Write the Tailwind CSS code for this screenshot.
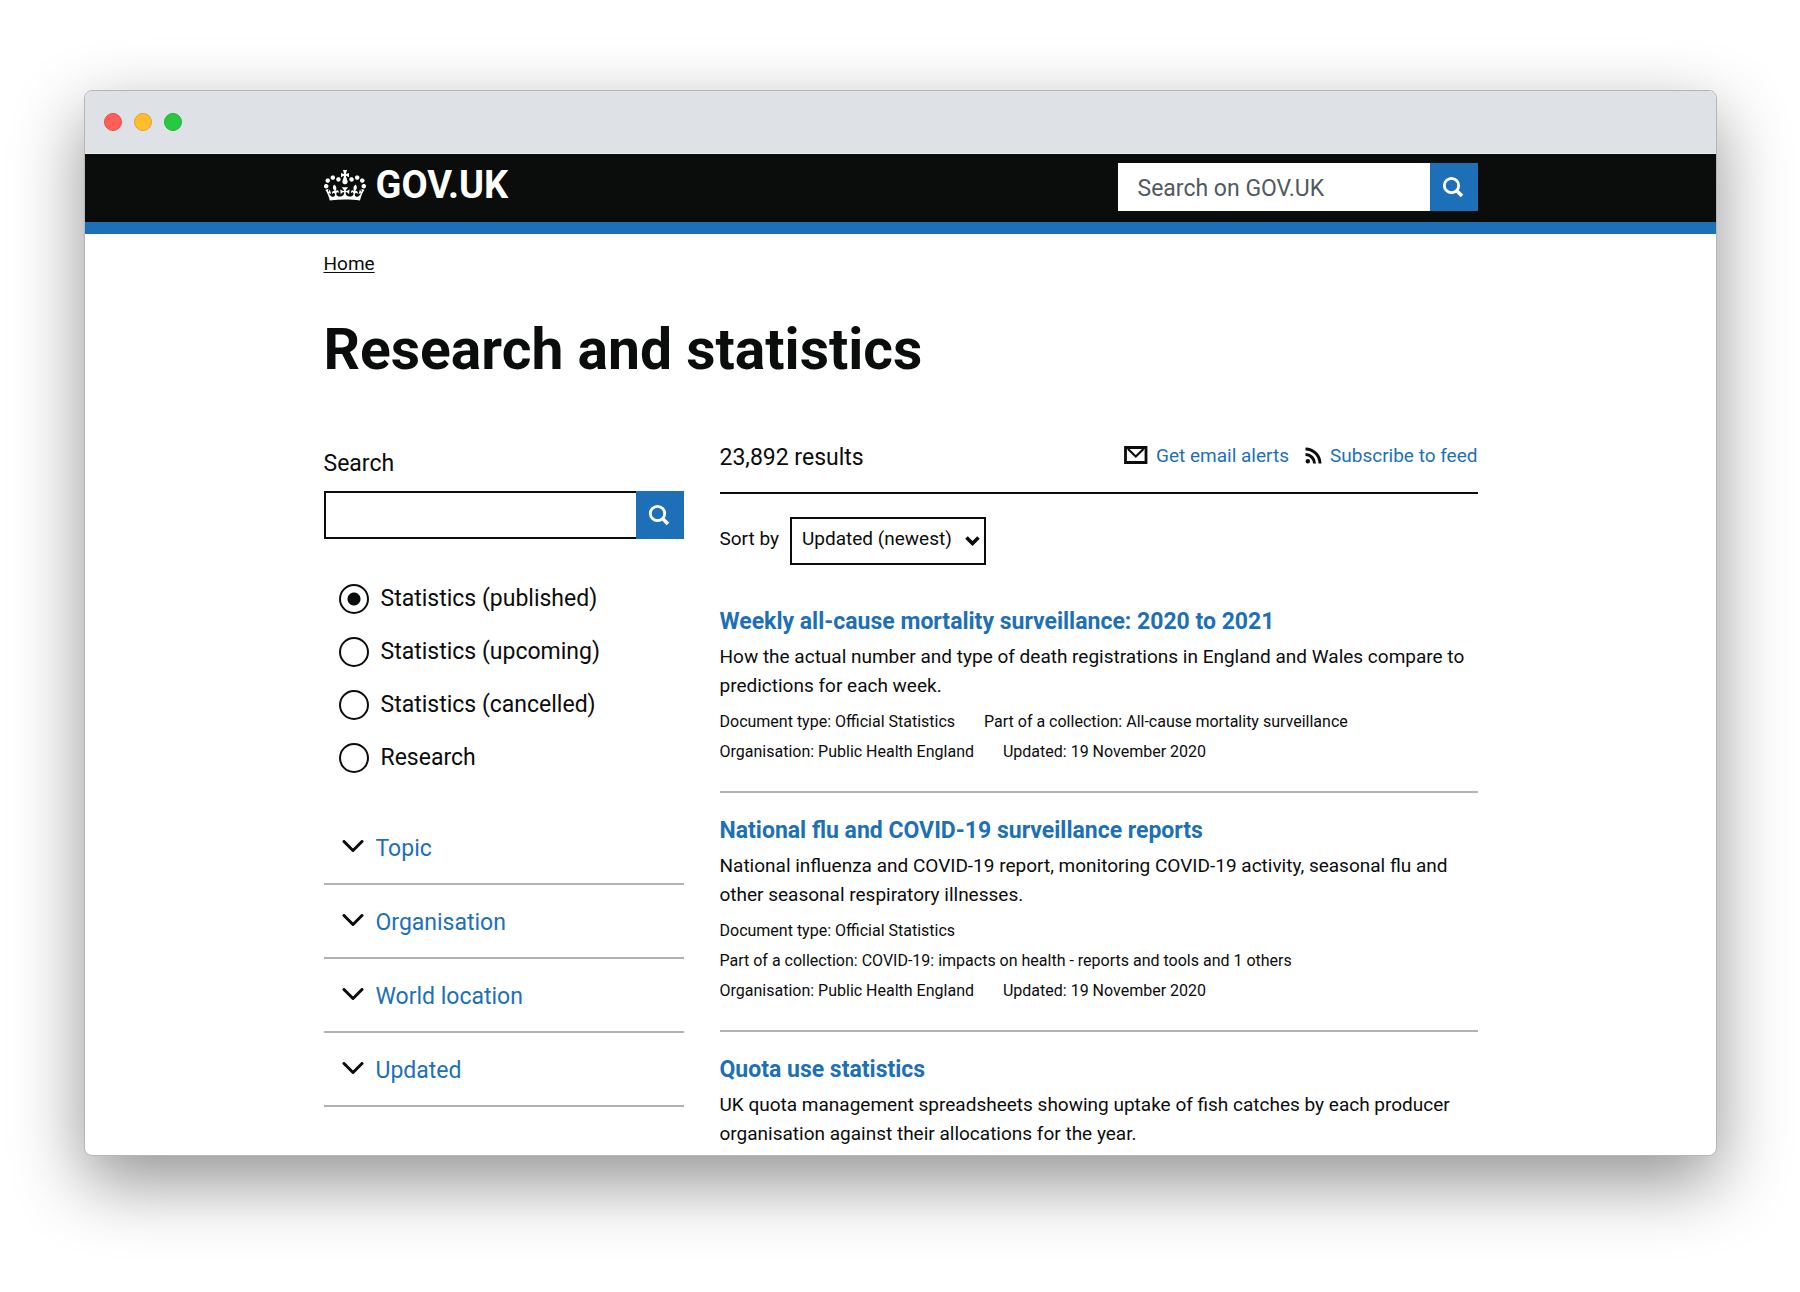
<!DOCTYPE html>
<html lang="en">
<head>
<meta charset="utf-8">
<meta name="viewport" content="width=device-width, initial-scale=1">
<title>Research and statistics - GOV.UK</title>
<script src="https://cdn.jsdelivr.net/npm/@tailwindcss/browser@4"></script>
</head>
<body class="flex h-screen flex-col bg-white pt-[90px] pr-[83px] pb-[136px] pl-[84px] font-[Roboto,sans-serif] text-[#0b0c0c]">
<div class="flex min-h-0 flex-1 flex-col overflow-hidden rounded-lg border border-[#b4b6b8] bg-white shadow-[0_26px_70px_rgba(0,0,0,0.43)]">

  <!-- Window title bar -->
  <div class="flex h-[63px] shrink-0 items-center gap-3 border-b border-[#eceef0] bg-[#dee1e6] px-[19px]">
    <span class="size-[18px] rounded-full border border-[#e2504a] bg-[#ff5f57]"></span>
    <span class="size-[18px] rounded-full border border-[#e0a32c] bg-[#ffbd2e]"></span>
    <span class="size-[18px] rounded-full border border-[#24b03a] bg-[#28c940]"></span>
  </div>

  <header class="shrink-0 border-b-12 border-[#1d70b8] bg-[#0b0c0c]">
    <div class="mx-auto flex h-[68px] w-full max-w-[1154px] items-center justify-between pb-0.5">
      <a href="#" class="flex items-center gap-2.5 pb-1 text-white">
        <svg class="h-[31px] w-[42px]" viewBox="0 0 132 97" fill="currentColor" aria-hidden="true"><path fill-rule="evenodd" d="M25 30.2c3.5 1.5 7.7-.2 9.1-3.7 1.5-3.6-.2-7.8-3.9-9.2-3.6-1.4-7.6.3-9.1 3.9-1.4 3.5.3 7.5 3.9 9zM9 39.5c3.6 1.5 7.8-.2 9.2-3.7 1.5-3.6-.2-7.8-3.9-9.1-3.6-1.5-7.6.2-9.1 3.8-1.4 3.5.3 7.5 3.8 9zM4.4 57.2c3.5 1.5 7.7-.2 9.1-3.8 1.5-3.6-.2-7.7-3.9-9.1-3.5-1.5-7.6.3-9.1 3.8-1.4 3.5.3 7.6 3.9 9.1zm38.3-21.4c3.5 1.5 7.7-.2 9.1-3.8 1.5-3.6-.2-7.7-3.9-9.1-3.6-1.5-7.6.3-9.1 3.8-1.3 3.6.4 7.7 3.9 9.1zm64.4-5.6c-3.6 1.5-7.8-.2-9.1-3.7-1.5-3.6.2-7.8 3.8-9.2 3.6-1.4 7.7.3 9.2 3.9 1.3 3.5-.4 7.5-3.9 9zm15.9 9.3c-3.6 1.5-7.7-.2-9.1-3.7-1.5-3.6.2-7.8 3.7-9.1 3.6-1.5 7.7.2 9.2 3.8 1.5 3.5-.3 7.5-3.8 9zm4.7 17.7c-3.6 1.5-7.8-.2-9.2-3.8-1.5-3.6.2-7.7 3.9-9.1 3.6-1.5 7.7.3 9.2 3.8 1.3 3.5-.4 7.6-3.9 9.1zM89.3 35.8c-3.6 1.5-7.8-.2-9.2-3.8-1.4-3.6.2-7.7 3.9-9.1 3.6-1.5 7.7.3 9.2 3.8 1.4 3.6-.3 7.7-3.9 9.1zM69.7 17.7l8.9 4.7V9.3l-8.9 2.8c-.2-.3-.5-.6-.9-.9L72.4 0H59.6l3.5 11.2c-.3.3-.6.5-.9.9l-8.8-2.8v13.1l8.8-4.7c.3.3.6.7.9.9l-5 15.4v.1c-.2.8-.4 1.6-.4 2.4 0 4.1 3.1 7.5 7 8.1h.2c.3 0 .7.1 1 .1.4 0 .7 0 1-.1h.2c4-.6 7.1-4.1 7.1-8.1 0-.8-.1-1.7-.4-2.4V34l-5.1-15.4c.4-.2.7-.6 1-.9zM66 92.8c16.9 0 32.8 1.1 47.1 3.2 4-16.9 8.9-26.7 14-33.5l-9.6-3.4c1 4.9 1.1 7.2 0 10.2-1.5-1.4-3-4.3-4.2-8.7L108.6 76c2.8-2 5-3.2 7.5-3.3-4.4 9.4-10 11.9-13.6 11.2-4.3-.8-6.3-4.6-5.6-7.9 1-4.7 5.7-5.9 8-.5 4.3-8.7-3-11.4-7.6-8.8 7.1-7.2 7.9-13.5 2.1-21.1-8 6.1-8.1 12.3-4.5 20.8-4.7-5.4-12.1-2.5-9.5 6.2 3.4-5.2 7.9-2 7.2 3.1-.6 4.3-6.4 7.8-13.5 7.2-10.3-.9-10.9-8-11.2-13.8 2.5-.5 7.1 1.8 11 7.3L80.2 60c-4.1 4.4-8 5.3-12.3 5.4 1.4-4.4 8-11.6 8-11.6H55.5s6.4 7.2 7.9 11.6c-4.2-.1-8-1-12.3-5.4l1.4 16.4c3.9-5.5 8.5-7.7 10.9-7.3-.3 5.8-.9 12.8-11.1 13.8-7.2.6-12.9-2.9-13.5-7.2-.7-5 3.8-8.3 7.1-3.1 2.7-8.7-4.6-11.6-9.4-6.2 3.7-8.5 3.6-14.7-4.6-20.8-5.8 7.6-5 13.9 2.2 21.1-4.7-2.6-11.9.1-7.7 8.8 2.3-5.5 7.1-4.2 8.1.5.7 3.3-1.3 7.1-5.7 7.9-3.5.7-9-1.8-13.5-11.2 2.5.1 4.7 1.3 7.5 3.3l-4.7-15.4c-1.2 4.4-2.7 7.2-4.3 8.7-1.1-3-.9-5.3 0-10.2l-9.5 3.4c5 6.9 9.9 16.7 14 33.5 14.8-2.1 30.8-3.2 47.7-3.2z"/></svg>
        <span class="text-[38px] leading-9 font-bold">GOV.UK</span>
      </a>
      <form class="flex h-12 w-[360px]">
        <input type="search" aria-label="Search on GOV.UK" placeholder="Search on GOV.UK" class="min-w-0 flex-1 bg-white px-5 pt-1 text-[23px] placeholder:text-[#505a5f] placeholder:opacity-100">
        <button type="button" aria-label="Search" class="flex size-12 items-center justify-center bg-[#1d70b8] text-white">
          <svg class="size-6" viewBox="0 0 24 24" fill="none" stroke="currentColor" aria-hidden="true"><circle cx="9.500" cy="10.500" r="7.200" stroke-width="2.800"/><path d="M14.500 15.500l5.500 5.500" stroke-width="3.600"/></svg>
        </button>
      </form>
    </div>
  </header>

  <div class="mx-auto w-full max-w-[1154px]">
    <nav aria-label="Breadcrumb" class="pt-[18px]">
      <a href="#" class="text-[19px] leading-6 underline underline-offset-2">Home</a>
    </nav>

    <main>
      <h1 class="mt-[41px] text-[57px] leading-[64px] font-bold">Research and statistics</h1>

      <div class="mt-[60px] grid grid-cols-[360px_minmax(0,1fr)] gap-9">
        <!-- Filters -->
        <form>
          <label for="keywords" class="mt-2 block text-[23px] leading-7">Search</label>
          <div class="mt-[13px] flex h-12">
            <input id="keywords" type="search" class="min-w-0 flex-1 border-2 border-r-0 border-[#0b0c0c] px-2 text-[23px]">
            <button type="button" aria-label="Search" class="flex size-12 items-center justify-center bg-[#1d70b8] text-white">
              <svg class="size-6" viewBox="0 0 24 24" fill="none" stroke="currentColor" aria-hidden="true"><circle cx="9.500" cy="10.500" r="7.200" stroke-width="2.800"/><path d="M14.500 15.500l5.500 5.500" stroke-width="3.600"/></svg>
            </button>
          </div>

          <fieldset aria-label="Content type" class="mt-[45px] flex flex-col gap-[23px] pl-[15px]">
            <label class="flex items-center gap-3 text-[23px] leading-[30px]"><input type="radio" name="content" checked class="size-[30px] appearance-none rounded-full border-2 border-[#0b0c0c] checked:bg-[radial-gradient(circle,#0b0c0c_6px,transparent_7px)]">Statistics (published)</label>
            <label class="flex items-center gap-3 text-[23px] leading-[30px]"><input type="radio" name="content" class="size-[30px] appearance-none rounded-full border-2 border-[#0b0c0c] checked:bg-[radial-gradient(circle,#0b0c0c_6px,transparent_7px)]">Statistics (upcoming)</label>
            <label class="flex items-center gap-3 text-[23px] leading-[30px]"><input type="radio" name="content" class="size-[30px] appearance-none rounded-full border-2 border-[#0b0c0c] checked:bg-[radial-gradient(circle,#0b0c0c_6px,transparent_7px)]">Statistics (cancelled)</label>
            <label class="flex items-center gap-3 text-[23px] leading-[30px]"><input type="radio" name="content" class="size-[30px] appearance-none rounded-full border-2 border-[#0b0c0c] checked:bg-[radial-gradient(circle,#0b0c0c_6px,transparent_7px)]">Research</label>
          </fieldset>

          <div class="mt-[38px] text-[23px] text-[#1d70b8]">
            <button type="button" class="flex h-[74px] w-full items-center gap-3 border-b-2 border-[#b1b4b6] pt-1 pl-[18px]"><svg class="mb-1.5 h-3 w-[22px] text-[#0b0c0c]" viewBox="0 0 22 12" fill="none" stroke="currentColor" stroke-width="3" stroke-linecap="round" stroke-linejoin="round" aria-hidden="true"><path d="M2 1.500l9 9 9-9"/></svg>Topic</button>
            <button type="button" class="flex h-[74px] w-full items-center gap-3 border-b-2 border-[#b1b4b6] pt-1 pl-[18px]"><svg class="mb-1.5 h-3 w-[22px] text-[#0b0c0c]" viewBox="0 0 22 12" fill="none" stroke="currentColor" stroke-width="3" stroke-linecap="round" stroke-linejoin="round" aria-hidden="true"><path d="M2 1.500l9 9 9-9"/></svg>Organisation</button>
            <button type="button" class="flex h-[74px] w-full items-center gap-3 border-b-2 border-[#b1b4b6] pt-1 pl-[18px]"><svg class="mb-1.5 h-3 w-[22px] text-[#0b0c0c]" viewBox="0 0 22 12" fill="none" stroke="currentColor" stroke-width="3" stroke-linecap="round" stroke-linejoin="round" aria-hidden="true"><path d="M2 1.500l9 9 9-9"/></svg>World location</button>
            <button type="button" class="flex h-[74px] w-full items-center gap-3 border-b-2 border-[#b1b4b6] pt-1 pl-[18px]"><svg class="mb-1.5 h-3 w-[22px] text-[#0b0c0c]" viewBox="0 0 22 12" fill="none" stroke="currentColor" stroke-width="3" stroke-linecap="round" stroke-linejoin="round" aria-hidden="true"><path d="M2 1.500l9 9 9-9"/></svg>Updated</button>
          </div>
        </form>

        <!-- Results -->
        <section aria-label="Results">
          <div class="flex items-start justify-between border-b-2 border-[#0b0c0c] pb-[18px]">
            <h2 class="text-[23px] leading-8">23,892 results</h2>
            <div class="flex items-center gap-4 pt-0.5 text-[19px] leading-6 text-[#1d70b8]">
              <a href="#" class="flex items-center gap-2"><svg class="mb-0.5 h-[18px] w-6 text-[#0b0c0c]" viewBox="0 0 24 18" fill="none" stroke="currentColor" stroke-width="2.800" aria-hidden="true"><path d="M1.500 1.500h20.500v15h-20.500z"/><path d="M4 3l7.800 7.500L19.500 3" stroke-width="2.200"/></svg>Get email alerts</a>
              <a href="#" class="flex items-center gap-2"><svg class="mb-0.5 size-[17px] text-[#0b0c0c]" viewBox="0 0 17 17" fill="none" stroke="currentColor" stroke-width="3" aria-hidden="true"><circle cx="2.800" cy="14.200" r="2.200" fill="currentColor" stroke="none"/><path d="M.5 7.500a9 9 0 0 1 9 9M.5 2a14.500 14.500 0 0 1 14.500 14.500"/></svg>Subscribe to feed</a>
            </div>
          </div>

          <div class="mt-[23px] flex items-center gap-[11px]">
            <label for="order" class="pb-1 text-[19px] leading-6">Sort by</label>
            <div class="relative">
              <select id="order" class="h-12 w-[196px] appearance-none border-2 border-[#0b0c0c] bg-white pr-8 pb-1 pl-2.5 text-[19px]"><option>Updated (newest)</option></select>
              <svg class="pointer-events-none absolute top-[19px] right-1.5 h-[10px] w-[15px]" viewBox="0 0 15 10" fill="none" stroke="currentColor" stroke-width="3.600" aria-hidden="true"><path d="M1.500 1.500l6 6 6-6"/></svg>
            </div>
          </div>

          <ul class="mt-[41px]">
            <li class="border-b-2 border-[#b1b4b6] pb-6">
              <a href="#" class="block text-[23px] leading-8 font-bold text-[#1d70b8]">Weekly all-cause mortality surveillance: 2020 to 2021</a>
              <p class="mt-1 text-[19px] leading-[29px]">How the actual number and type of death registrations in England and Wales compare to predictions for each week.</p>
              <ul class="mt-[7px] flex flex-wrap gap-x-[29px] text-base leading-[30px]">
                <li>Document type: Official Statistics</li>
                <li>Part of a collection: All-cause mortality surveillance</li>
                <li>Organisation: Public Health England</li>
                <li>Updated: 19 November 2020</li>
              </ul>
            </li>
            <li class="border-b-2 border-[#b1b4b6] pt-[22px] pb-6">
              <a href="#" class="block text-[23px] leading-8 font-bold text-[#1d70b8]">National flu and COVID-19 surveillance reports</a>
              <p class="mt-1 text-[19px] leading-[29px]">National influenza and COVID-19 report, monitoring COVID-19 activity, seasonal flu and other seasonal respiratory illnesses.</p>
              <ul class="mt-[7px] flex flex-wrap gap-x-[29px] text-base leading-[30px]">
                <li>Document type: Official Statistics</li>
                <li>Part of a collection: COVID-19: impacts on health - reports and tools and 1 others</li>
                <li>Organisation: Public Health England</li>
                <li>Updated: 19 November 2020</li>
              </ul>
            </li>
            <li class="pt-[22px]">
              <a href="#" class="block text-[23px] leading-8 font-bold text-[#1d70b8]">Quota use statistics</a>
              <p class="mt-1 text-[19px] leading-[29px]">UK quota management spreadsheets showing uptake of fish catches by each producer organisation against their allocations for the year.</p>
            </li>
          </ul>
        </section>
      </div>
    </main>
  </div>
</div>
</body>
</html>
